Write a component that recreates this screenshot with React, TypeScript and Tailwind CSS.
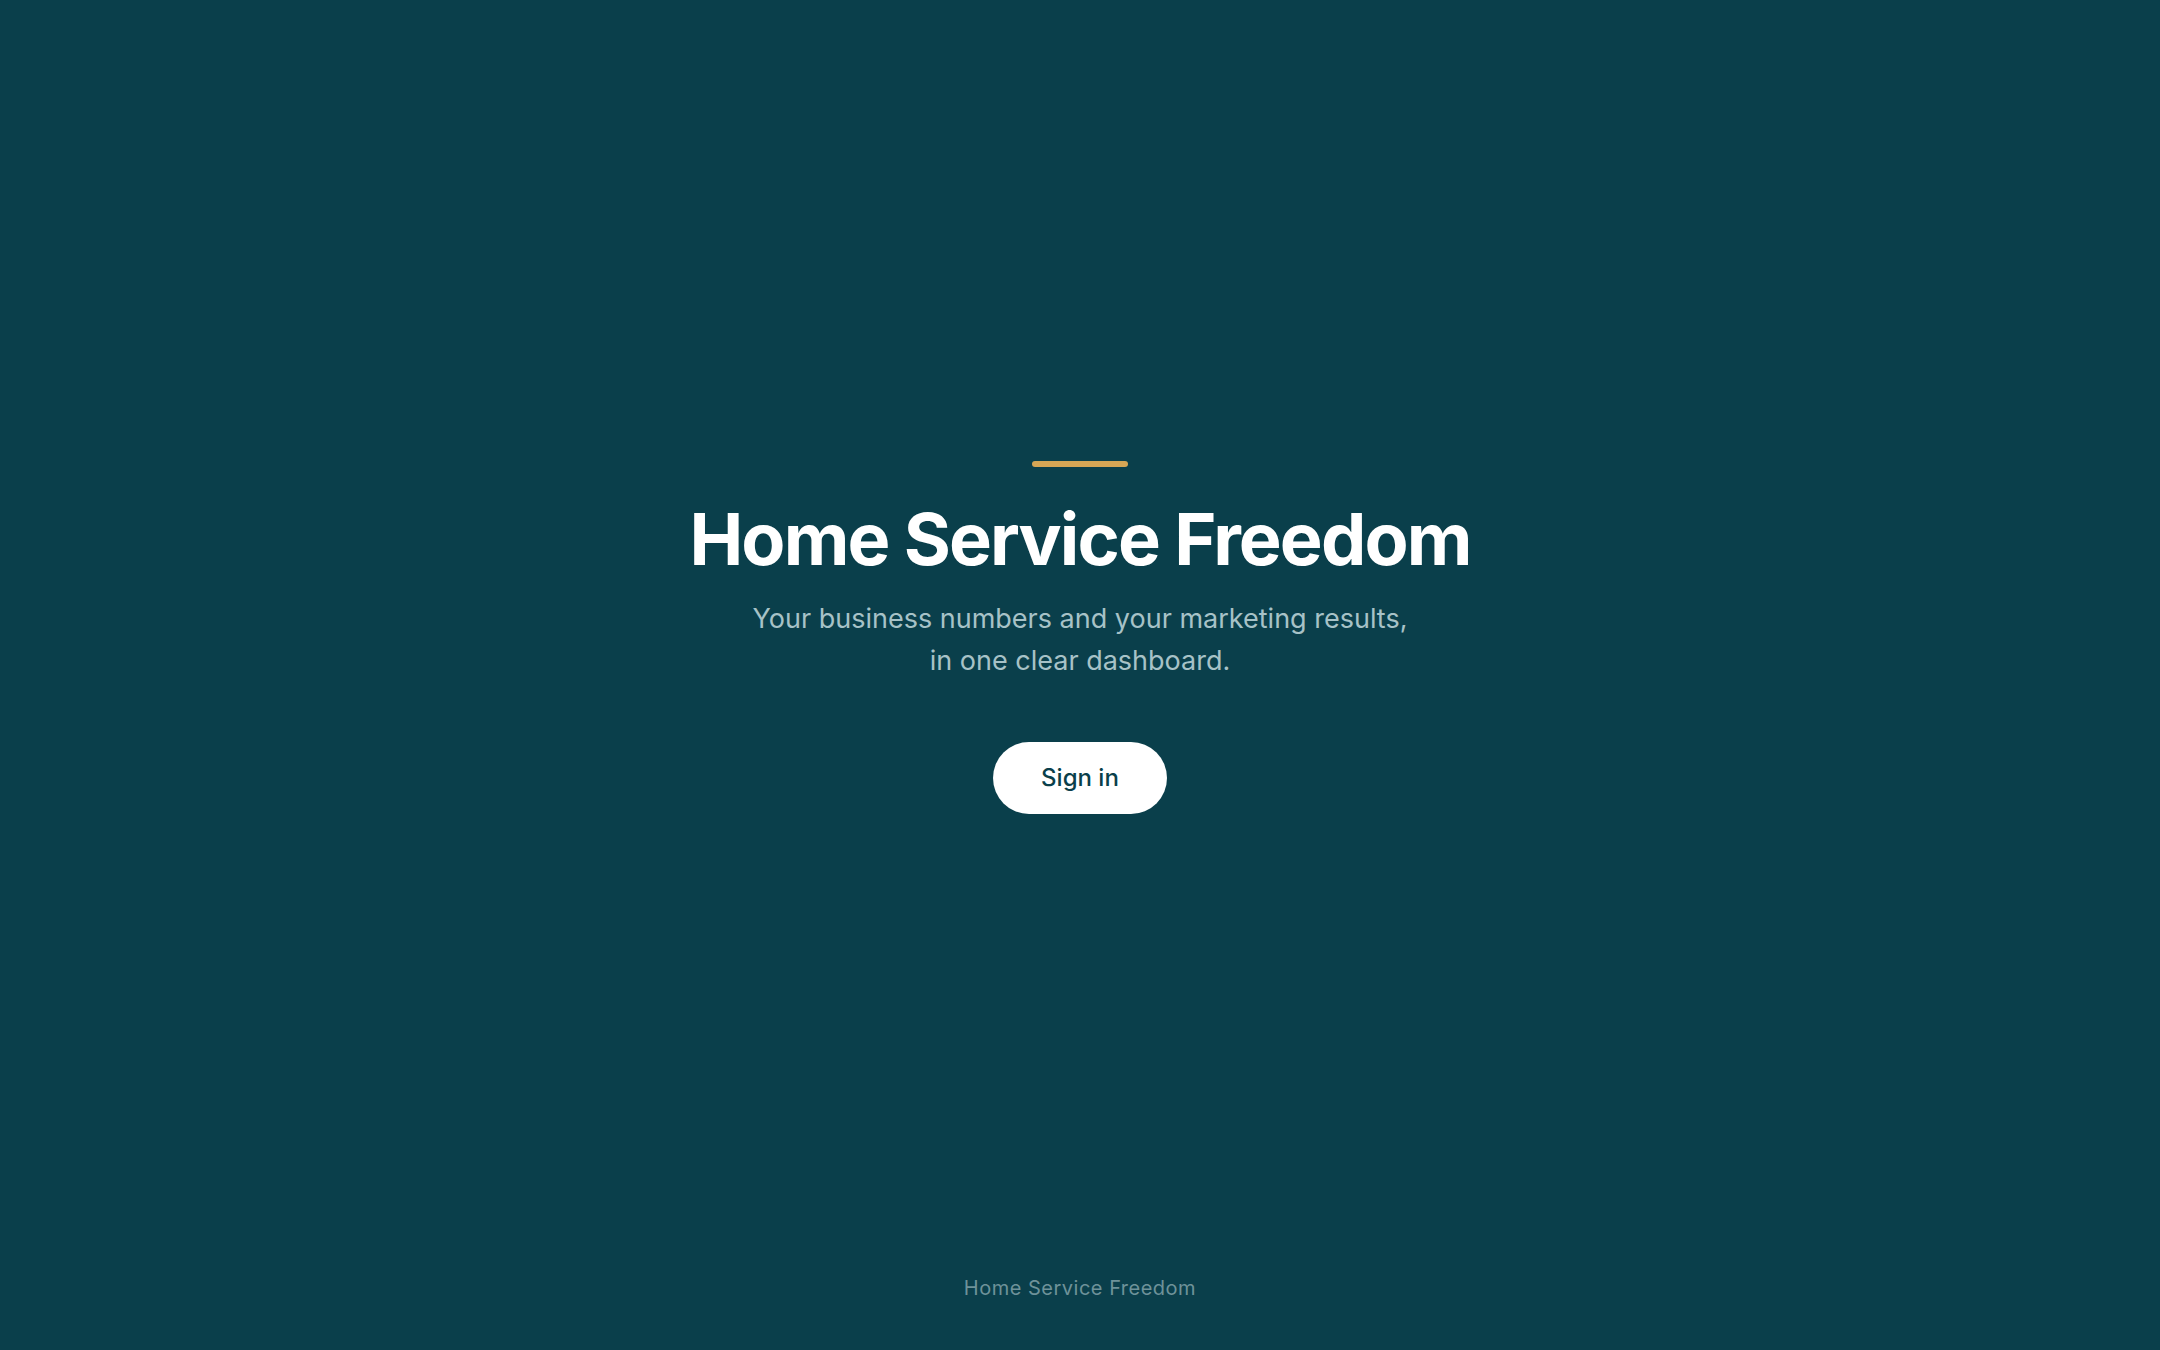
// Landing page: accent bar, headline, tagline, sign-in button, footer

export default function App() {
  return (
    <div
      className="min-h-screen flex flex-col bg-[#0a3f4b] text-white"
      style={{ fontFamily: "Inter, 'Noto Sans', sans-serif" }}
    >
      <main className="flex-1 flex items-center justify-center">
        <div className="flex flex-col items-center text-center">
          {/* accent bar */}
          <div className="w-24 h-1.5 rounded-full bg-[#d6a655]" />

          <h1 className="mt-8 text-[72px] leading-[79px] font-bold tracking-[-0.026em] text-white">
            Home Service Freedom
          </h1>

          <p className="mt-5 text-[27px] leading-[42px] text-[#a7c2c7]">
            Your business numbers and your marketing results,
            <br />
            in one clear dashboard.
          </p>

          <button
            type="button"
            className="mt-[60px] h-[72px] px-12 rounded-full bg-white text-[#0a3f4b] text-[24px] leading-8 font-medium"
          >
            Sign in
          </button>
        </div>
      </main>

      <footer className="pb-12 text-center text-[20px] leading-7 tracking-wide text-[#6e9299]">
        Home Service Freedom
      </footer>
    </div>
  )
}
